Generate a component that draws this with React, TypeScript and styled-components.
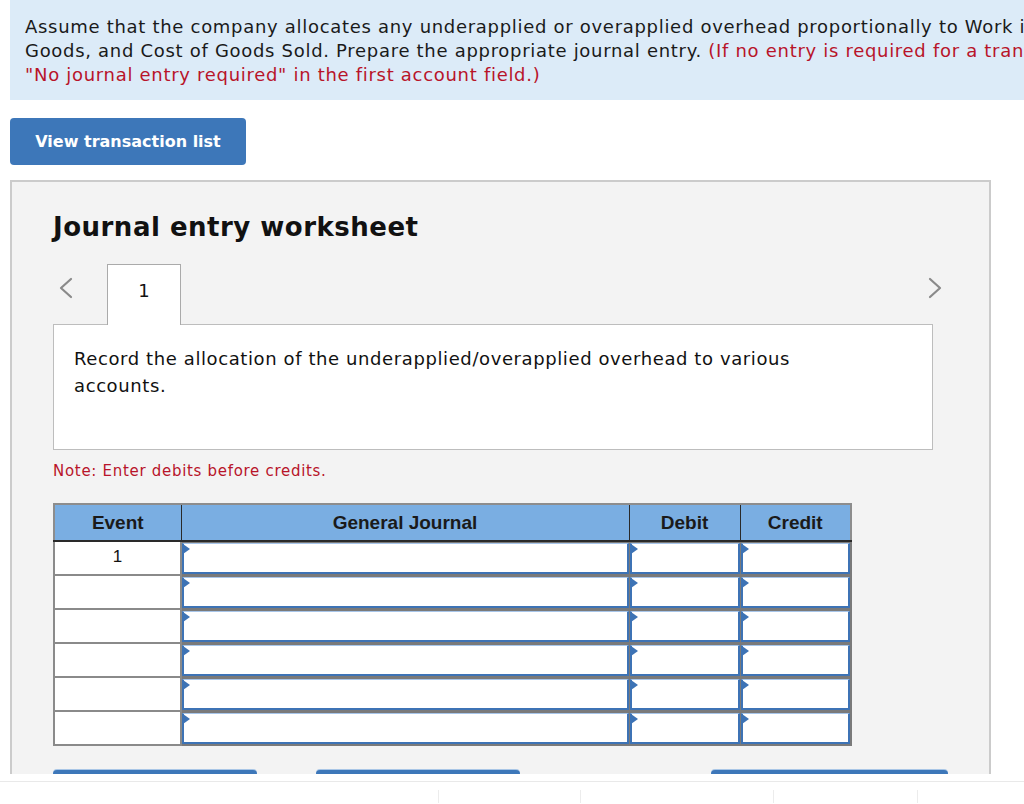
import styled, { createGlobalStyle } from 'styled-components';

const GlobalStyle = createGlobalStyle`
  html, body {
    margin: 0;
    padding: 0;
    background: #ffffff;
    overflow: hidden;
  }
  body {
    font-family: "DejaVu Sans", Verdana, sans-serif;
    color: #111;
  }
`;

const Viewport = styled.div`
  height: 774px;
  overflow: hidden;
  padding-left: 10px;
`;

const Instructions = styled.div`
  width: 1200px;
  box-sizing: border-box;
  background: #dcebf8;
  padding: 15px 15px 13px;
  font-size: 18px;
  letter-spacing: 0.7px;
  line-height: 24px;
  color: #1a1a1a;
  white-space: nowrap;
`;

const Red = styled.span`
  color: #b8142a;
`;

const PrimaryButton = styled.button`
  display: block;
  margin-top: 18px;
  width: 236px;
  height: 47px;
  border: none;
  border-radius: 4px;
  background: #3d77b9;
  color: #fff;
  font-family: "DejaVu Sans", Verdana, sans-serif;
  font-weight: bold;
  font-size: 16px;
  cursor: pointer;
`;

const Panel = styled.section`
  margin-top: 15px;
  width: 981px;
  box-sizing: border-box;
  background: #f3f3f3;
  border: 2px solid #cbcbcb;
  padding: 29px 56px 0 41px;
  min-height: 700px;
`;

const Title = styled.h2`
  margin: 0;
  font-size: 26px;
  letter-spacing: 0.5px;
  line-height: 32px;
  font-weight: bold;
  color: #111;
`;

const TabRow = styled.div`
  display: flex;
  align-items: flex-end;
  margin-top: 21px;
  height: 61px;
  position: relative;
  z-index: 1;
`;

const Chevron = styled.button`
  background: none;
  border: none;
  padding: 0;
  width: 16px;
  height: 22px;
  align-self: flex-start;
  margin-top: 13px;
  cursor: pointer;
  color: #8a8a8a;
`;

const LeftChevron = styled(Chevron)`
  margin-left: 5px;
`;

const RightChevron = styled(Chevron)`
  margin-left: auto;
  margin-right: -10px;
`;

const Tab = styled.div`
  margin-left: 33px;
  width: 74px;
  height: 61px;
  box-sizing: border-box;
  background: #fff;
  border: 1px solid #aaaaaa;
  border-bottom: none;
  display: flex;
  justify-content: center;
  padding-top: 15px;
  font-size: 18px;
  line-height: 22px;
`;

const Prompt = styled.div`
  margin-top: -1px;
  height: 126px;
  box-sizing: border-box;
  background: #fff;
  border: 1px solid #bdbdbd;
  padding: 20px 20px;
  font-size: 18px;
  letter-spacing: 0.6px;
  line-height: 27px;
`;

const Note = styled.p`
  margin: 11px 0 0;
  font-size: 15px;
  letter-spacing: 0.7px;
  line-height: 20px;
  color: #b8142a;
`;

const Table = styled.table`
  margin-top: 22px;
  width: 797px;
  border-collapse: collapse;
  font-family: "Liberation Sans", Arial, sans-serif;
  table-layout: fixed;
`;

const Th = styled.th<{ $w: number }>`
  width: ${(p) => p.$w}px;
  height: 37px;
  box-sizing: border-box;
  background: #7aaee2;
  color: #1a1a1a;
  font-size: 19px;
  font-weight: bold;
  border: 1px solid #2a2a2a;
  border-top: 2px solid #8d8d8d;
  border-bottom: 2px solid #2a2a2a;
  padding: 0;
  &:first-child {
    border-left: 2px solid #8d8d8d;
  }
  &:last-child {
    border-right: 2px solid #8d8d8d;
  }
`;

const EventCell = styled.td`
  height: 34px;
  box-sizing: border-box;
  background: #fff;
  border: 2px solid #8a8a8a;
  border-top-width: 1px;
  text-align: center;
  vertical-align: middle;
  font-size: 17px;
  padding: 0 0 2px;
`;

const InputCell = styled.td`
  height: 34px;
  box-sizing: border-box;
  padding: 0;
  border: 1px solid #7a7a7a;
  border-bottom-width: 2px;
  background: #7a7a7a;
  &:last-child {
    border-right-width: 2px;
  }
`;

const EntryField = styled.div`
  position: relative;
  height: 31px;
  box-sizing: border-box;
  background: #fff;
  border: 2px solid #3d73b5;
  border-top: 1px solid #a8c6ea;
  &::before {
    content: '';
    position: absolute;
    left: -1px;
    top: 0;
    border-top: 5px solid transparent;
    border-bottom: 5px solid transparent;
    border-left: 7px solid #3d73b5;
  }
`;

const ActionRow = styled.div`
  display: flex;
  margin-top: 24px;
`;

const ActionButton = styled.button<{ $w: number; $gap: number }>`
  flex-shrink: 0;
  width: ${(p) => p.$w}px;
  margin-left: ${(p) => p.$gap}px;
  height: 44px;
  border: none;
  border-radius: 4px;
  background: #3d77b9;
  box-shadow: 0 -1px 0 #a9c6e6;
`;

const Footer = styled.footer`
  margin-top: 7px;
  border-top: 1px solid #e9e9e9;
  height: 22px;
  display: flex;
  padding-top: 8px;
  box-sizing: border-box;
`;

const FooterSlot = styled.div<{ $w: number }>`
  width: ${(p) => p.$w}px;
  border-right: 1px solid #ececec;
  flex-shrink: 0;
`;

function ChevronIcon({ dir }: { dir: 'left' | 'right' }) {
  return (
    <svg width="16" height="22" viewBox="0 0 16 22" fill="none" aria-hidden>
      <polyline
        points={dir === 'left' ? '13,2 3,11 13,20' : '3,2 13,11 3,20'}
        stroke="currentColor"
        strokeWidth="2.2"
        strokeLinecap="round"
        strokeLinejoin="round"
      />
    </svg>
  );
}

const rows = [1, 2, 3, 4, 5, 6];

export default function App() {
  return (
    <>
      <GlobalStyle />
      <Viewport>
        <Instructions>
          Assume that the company allocates any underapplied or overapplied overhead proportionally to Work in Process, Finished
          <br />
          Goods, and Cost of Goods Sold. Prepare the appropriate journal entry.{' '}
          <Red>(If no entry is required for a transaction/event, select</Red>
          <br />
          <Red>"No journal entry required" in the first account field.)</Red>
        </Instructions>

        <PrimaryButton>View transaction list</PrimaryButton>

        <Panel>
          <Title>Journal entry worksheet</Title>

          <TabRow>
            <LeftChevron aria-label="Previous">
              <ChevronIcon dir="left" />
            </LeftChevron>
            <Tab>1</Tab>
            <RightChevron aria-label="Next">
              <ChevronIcon dir="right" />
            </RightChevron>
          </TabRow>

          <Prompt>
            Record the allocation of the underapplied/overapplied overhead to various
            <br />
            accounts.
          </Prompt>

          <Note>Note: Enter debits before credits.</Note>

          <Table>
            <thead>
              <tr>
                <Th $w={127}>Event</Th>
                <Th $w={448}>General Journal</Th>
                <Th $w={111}>Debit</Th>
                <Th $w={111}>Credit</Th>
              </tr>
            </thead>
            <tbody>
              {rows.map((r) => (
                <tr key={r}>
                  <EventCell>{r === 1 ? '1' : ''}</EventCell>
                  <InputCell>
                    <EntryField />
                  </InputCell>
                  <InputCell>
                    <EntryField />
                  </InputCell>
                  <InputCell>
                    <EntryField />
                  </InputCell>
                </tr>
              ))}
            </tbody>
          </Table>

          <ActionRow>
            <ActionButton $w={204} $gap={0} />
            <ActionButton $w={204} $gap={59} />
            <ActionButton $w={237} $gap={191} />
          </ActionRow>
        </Panel>
      </Viewport>
      <Footer>
        <FooterSlot $w={438} />
        <FooterSlot $w={141} />
        <FooterSlot $w={192} />
        <FooterSlot $w={143} />
      </Footer>
    </>
  );
}
